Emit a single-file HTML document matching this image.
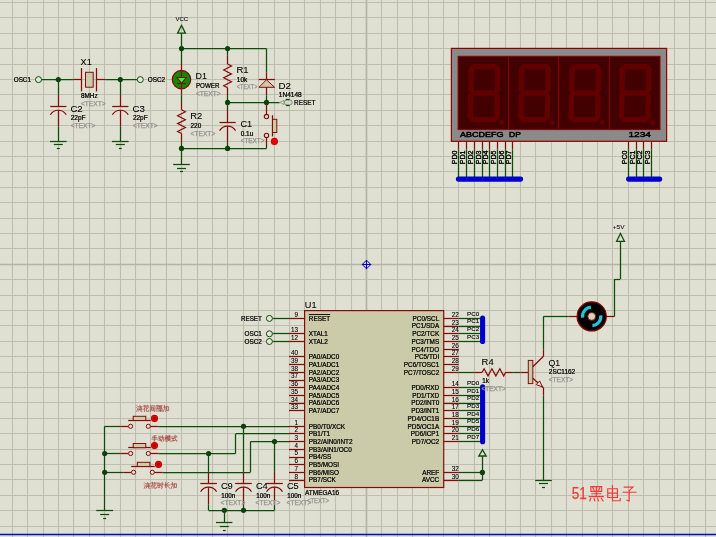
<!DOCTYPE html>
<html><head><meta charset="utf-8"><title>schematic</title>
<style>
html,body{margin:0;padding:0;background:#dfe0d1;overflow:hidden}
#sheet{width:716px;height:537px;background:#dfe0d1;overflow:hidden}
svg{display:block;will-change:transform;font-family:"Liberation Sans",sans-serif}
</style></head><body>
<div id="sheet"><svg width="716" height="537" viewBox="0 0 716 537">
<line x1="12.5" y1="0" x2="12.5" y2="537" stroke="#bdbeae" stroke-width="1.1"/>
<line x1="27.5" y1="0" x2="27.5" y2="537" stroke="#bdbeae" stroke-width="1.1"/>
<line x1="43.5" y1="0" x2="43.5" y2="537" stroke="#bdbeae" stroke-width="1.1"/>
<line x1="58.5" y1="0" x2="58.5" y2="537" stroke="#bdbeae" stroke-width="1.1"/>
<line x1="73.5" y1="0" x2="73.5" y2="537" stroke="#bdbeae" stroke-width="1.1"/>
<line x1="89.5" y1="0" x2="89.5" y2="537" stroke="#bdbeae" stroke-width="1.1"/>
<line x1="104.5" y1="0" x2="104.5" y2="537" stroke="#bdbeae" stroke-width="1.1"/>
<line x1="120.5" y1="0" x2="120.5" y2="537" stroke="#bdbeae" stroke-width="1.1"/>
<line x1="135.5" y1="0" x2="135.5" y2="537" stroke="#bdbeae" stroke-width="1.1"/>
<line x1="150.5" y1="0" x2="150.5" y2="537" stroke="#bdbeae" stroke-width="1.1"/>
<line x1="166.5" y1="0" x2="166.5" y2="537" stroke="#bdbeae" stroke-width="1.1"/>
<line x1="181.5" y1="0" x2="181.5" y2="537" stroke="#bdbeae" stroke-width="1.1"/>
<line x1="197.5" y1="0" x2="197.5" y2="537" stroke="#bdbeae" stroke-width="1.1"/>
<line x1="212.5" y1="0" x2="212.5" y2="537" stroke="#bdbeae" stroke-width="1.1"/>
<line x1="227.5" y1="0" x2="227.5" y2="537" stroke="#bdbeae" stroke-width="1.1"/>
<line x1="243.5" y1="0" x2="243.5" y2="537" stroke="#bdbeae" stroke-width="1.1"/>
<line x1="258.5" y1="0" x2="258.5" y2="537" stroke="#bdbeae" stroke-width="1.1"/>
<line x1="274.5" y1="0" x2="274.5" y2="537" stroke="#bdbeae" stroke-width="1.1"/>
<line x1="289.5" y1="0" x2="289.5" y2="537" stroke="#bdbeae" stroke-width="1.1"/>
<line x1="304.5" y1="0" x2="304.5" y2="537" stroke="#bdbeae" stroke-width="1.1"/>
<line x1="320.5" y1="0" x2="320.5" y2="537" stroke="#bdbeae" stroke-width="1.1"/>
<line x1="335.5" y1="0" x2="335.5" y2="537" stroke="#bdbeae" stroke-width="1.1"/>
<line x1="351.5" y1="0" x2="351.5" y2="537" stroke="#bdbeae" stroke-width="1.1"/>
<line x1="366.5" y1="0" x2="366.5" y2="537" stroke="#b3b4a3" stroke-width="1.7"/>
<line x1="381.5" y1="0" x2="381.5" y2="537" stroke="#bdbeae" stroke-width="1.1"/>
<line x1="397.5" y1="0" x2="397.5" y2="537" stroke="#bdbeae" stroke-width="1.1"/>
<line x1="412.5" y1="0" x2="412.5" y2="537" stroke="#bdbeae" stroke-width="1.1"/>
<line x1="428.5" y1="0" x2="428.5" y2="537" stroke="#bdbeae" stroke-width="1.1"/>
<line x1="443.5" y1="0" x2="443.5" y2="537" stroke="#bdbeae" stroke-width="1.1"/>
<line x1="458.5" y1="0" x2="458.5" y2="537" stroke="#bdbeae" stroke-width="1.1"/>
<line x1="474.5" y1="0" x2="474.5" y2="537" stroke="#bdbeae" stroke-width="1.1"/>
<line x1="489.5" y1="0" x2="489.5" y2="537" stroke="#bdbeae" stroke-width="1.1"/>
<line x1="505.5" y1="0" x2="505.5" y2="537" stroke="#bdbeae" stroke-width="1.1"/>
<line x1="520.5" y1="0" x2="520.5" y2="537" stroke="#bdbeae" stroke-width="1.1"/>
<line x1="535.5" y1="0" x2="535.5" y2="537" stroke="#bdbeae" stroke-width="1.1"/>
<line x1="551.5" y1="0" x2="551.5" y2="537" stroke="#bdbeae" stroke-width="1.1"/>
<line x1="566.5" y1="0" x2="566.5" y2="537" stroke="#bdbeae" stroke-width="1.1"/>
<line x1="582.5" y1="0" x2="582.5" y2="537" stroke="#bdbeae" stroke-width="1.1"/>
<line x1="597.5" y1="0" x2="597.5" y2="537" stroke="#bdbeae" stroke-width="1.1"/>
<line x1="612.5" y1="0" x2="612.5" y2="537" stroke="#bdbeae" stroke-width="1.1"/>
<line x1="628.5" y1="0" x2="628.5" y2="537" stroke="#bdbeae" stroke-width="1.1"/>
<line x1="643.5" y1="0" x2="643.5" y2="537" stroke="#bdbeae" stroke-width="1.1"/>
<line x1="659.5" y1="0" x2="659.5" y2="537" stroke="#bdbeae" stroke-width="1.1"/>
<line x1="674.5" y1="0" x2="674.5" y2="537" stroke="#bdbeae" stroke-width="1.1"/>
<line x1="689.5" y1="0" x2="689.5" y2="537" stroke="#bdbeae" stroke-width="1.1"/>
<line x1="705.5" y1="0" x2="705.5" y2="537" stroke="#bdbeae" stroke-width="1.1"/>
<line x1="0" y1="2.5" x2="716" y2="2.5" stroke="#bdbeae" stroke-width="1.1"/>
<line x1="0" y1="17.5" x2="716" y2="17.5" stroke="#bdbeae" stroke-width="1.1"/>
<line x1="0" y1="33.5" x2="716" y2="33.5" stroke="#bdbeae" stroke-width="1.1"/>
<line x1="0" y1="48.5" x2="716" y2="48.5" stroke="#bdbeae" stroke-width="1.1"/>
<line x1="0" y1="64.5" x2="716" y2="64.5" stroke="#bdbeae" stroke-width="1.1"/>
<line x1="0" y1="79.5" x2="716" y2="79.5" stroke="#bdbeae" stroke-width="1.1"/>
<line x1="0" y1="94.5" x2="716" y2="94.5" stroke="#bdbeae" stroke-width="1.1"/>
<line x1="0" y1="110.5" x2="716" y2="110.5" stroke="#bdbeae" stroke-width="1.1"/>
<line x1="0" y1="125.5" x2="716" y2="125.5" stroke="#bdbeae" stroke-width="1.1"/>
<line x1="0" y1="141.5" x2="716" y2="141.5" stroke="#bdbeae" stroke-width="1.1"/>
<line x1="0" y1="156.5" x2="716" y2="156.5" stroke="#bdbeae" stroke-width="1.1"/>
<line x1="0" y1="171.5" x2="716" y2="171.5" stroke="#bdbeae" stroke-width="1.1"/>
<line x1="0" y1="187.5" x2="716" y2="187.5" stroke="#bdbeae" stroke-width="1.1"/>
<line x1="0" y1="202.5" x2="716" y2="202.5" stroke="#bdbeae" stroke-width="1.1"/>
<line x1="0" y1="218.5" x2="716" y2="218.5" stroke="#bdbeae" stroke-width="1.1"/>
<line x1="0" y1="233.5" x2="716" y2="233.5" stroke="#bdbeae" stroke-width="1.1"/>
<line x1="0" y1="248.5" x2="716" y2="248.5" stroke="#bdbeae" stroke-width="1.1"/>
<line x1="0" y1="264.5" x2="716" y2="264.5" stroke="#b3b4a3" stroke-width="1.7"/>
<line x1="0" y1="279.5" x2="716" y2="279.5" stroke="#bdbeae" stroke-width="1.1"/>
<line x1="0" y1="295.5" x2="716" y2="295.5" stroke="#bdbeae" stroke-width="1.1"/>
<line x1="0" y1="310.5" x2="716" y2="310.5" stroke="#bdbeae" stroke-width="1.1"/>
<line x1="0" y1="325.5" x2="716" y2="325.5" stroke="#bdbeae" stroke-width="1.1"/>
<line x1="0" y1="341.5" x2="716" y2="341.5" stroke="#bdbeae" stroke-width="1.1"/>
<line x1="0" y1="356.5" x2="716" y2="356.5" stroke="#bdbeae" stroke-width="1.1"/>
<line x1="0" y1="372.5" x2="716" y2="372.5" stroke="#bdbeae" stroke-width="1.1"/>
<line x1="0" y1="387.5" x2="716" y2="387.5" stroke="#bdbeae" stroke-width="1.1"/>
<line x1="0" y1="402.5" x2="716" y2="402.5" stroke="#bdbeae" stroke-width="1.1"/>
<line x1="0" y1="418.5" x2="716" y2="418.5" stroke="#bdbeae" stroke-width="1.1"/>
<line x1="0" y1="433.5" x2="716" y2="433.5" stroke="#bdbeae" stroke-width="1.1"/>
<line x1="0" y1="449.5" x2="716" y2="449.5" stroke="#bdbeae" stroke-width="1.1"/>
<line x1="0" y1="464.5" x2="716" y2="464.5" stroke="#bdbeae" stroke-width="1.1"/>
<line x1="0" y1="479.5" x2="716" y2="479.5" stroke="#bdbeae" stroke-width="1.1"/>
<line x1="0" y1="495.5" x2="716" y2="495.5" stroke="#bdbeae" stroke-width="1.1"/>
<line x1="0" y1="510.5" x2="716" y2="510.5" stroke="#bdbeae" stroke-width="1.1"/>
<line x1="0" y1="526.5" x2="716" y2="526.5" stroke="#bdbeae" stroke-width="1.1"/>
<line x1="0" y1="534.5" x2="716" y2="534.5" stroke="#0808c4" stroke-width="1.3"/>
<path d="M366.5 260.2 L370.8 264.5 L366.5 268.8 L362.2 264.5 Z" stroke="#0000c0" stroke-width="1" fill="none" stroke-linejoin="miter"/>
<line x1="362.2" y1="264.5" x2="370.8" y2="264.5" stroke="#0000c0" stroke-width="1"/>
<line x1="366.5" y1="260.2" x2="366.5" y2="268.8" stroke="#0000c0" stroke-width="1"/>
<text x="13.7" y="81.9" font-size="6.4" fill="#000000" stroke="#000000" stroke-width="0.24" text-anchor="start" textLength="17.3" lengthAdjust="spacingAndGlyphs">OSC1</text>
<line x1="41.5" y1="79.5" x2="73.2" y2="79.5" stroke="#0c4d0c" stroke-width="1.25"/>
<line x1="73.2" y1="79.5" x2="81.6" y2="79.5" stroke="#860a0a" stroke-width="1.25"/>
<line x1="81.5" y1="68.1" x2="81.5" y2="91.4" stroke="#860a0a" stroke-width="1.25"/>
<line x1="96.5" y1="68.1" x2="96.5" y2="91.4" stroke="#860a0a" stroke-width="1.25"/>
<rect x="85.5" y="72.3" width="7.7" height="14.9" stroke="#860a0a" fill="#cbcbaa" stroke-width="1"/>
<line x1="96.7" y1="79.5" x2="105.1" y2="79.5" stroke="#860a0a" stroke-width="1.25"/>
<line x1="105.1" y1="79.5" x2="137.3" y2="79.5" stroke="#0c4d0c" stroke-width="1.25"/>
<circle cx="38.5" cy="79.6" r="3" stroke="#0c4d0c" fill="#e6e7da" stroke-width="1"/>
<circle cx="140.3" cy="79.6" r="3" stroke="#0c4d0c" fill="#e6e7da" stroke-width="1"/>
<text x="147.8" y="81.9" font-size="6.4" fill="#000000" stroke="#000000" stroke-width="0.24" text-anchor="start" textLength="17.3" lengthAdjust="spacingAndGlyphs">OSC2</text>
<line x1="58.5" y1="79.6" x2="58.5" y2="94.9" stroke="#0c4d0c" stroke-width="1.25"/>
<line x1="58.5" y1="94.9" x2="58.5" y2="106.5" stroke="#860a0a" stroke-width="1.25"/>
<line x1="50.2" y1="106.5" x2="66.4" y2="106.5" stroke="#860a0a" stroke-width="1.25"/>
<path d="M50.3 114.8 A9.3 9.3 0 0 1 66.3 114.8" stroke="#860a0a" stroke-width="1.2" fill="none"/>
<line x1="58.5" y1="110.2" x2="58.5" y2="126.2" stroke="#860a0a" stroke-width="1.25"/>
<line x1="58.5" y1="126.2" x2="58.5" y2="133" stroke="#0c4d0c" stroke-width="1.25"/>
<line x1="120.5" y1="79.6" x2="120.5" y2="94.9" stroke="#0c4d0c" stroke-width="1.25"/>
<line x1="120.5" y1="94.9" x2="120.5" y2="106.5" stroke="#860a0a" stroke-width="1.25"/>
<line x1="112.2" y1="106.5" x2="128.4" y2="106.5" stroke="#860a0a" stroke-width="1.25"/>
<path d="M112.3 114.8 A9.3 9.3 0 0 1 128.3 114.8" stroke="#860a0a" stroke-width="1.2" fill="none"/>
<line x1="120.5" y1="110.2" x2="120.5" y2="126.2" stroke="#860a0a" stroke-width="1.25"/>
<line x1="120.5" y1="126.2" x2="120.5" y2="133" stroke="#0c4d0c" stroke-width="1.25"/>
<line x1="58.5" y1="133" x2="58.5" y2="141.1" stroke="#0c4d0c" stroke-width="1.25"/>
<line x1="50" y1="141.5" x2="66.6" y2="141.5" stroke="#0c4d0c" stroke-width="1.25"/>
<line x1="53.8" y1="144.5" x2="62.8" y2="144.5" stroke="#0c4d0c" stroke-width="1.25"/>
<line x1="56.8" y1="148.5" x2="59.8" y2="148.5" stroke="#0c4d0c" stroke-width="1.25"/>
<line x1="120.5" y1="133" x2="120.5" y2="141.1" stroke="#0c4d0c" stroke-width="1.25"/>
<line x1="112" y1="141.5" x2="128.6" y2="141.5" stroke="#0c4d0c" stroke-width="1.25"/>
<line x1="115.8" y1="144.5" x2="124.8" y2="144.5" stroke="#0c4d0c" stroke-width="1.25"/>
<line x1="118.8" y1="148.5" x2="121.8" y2="148.5" stroke="#0c4d0c" stroke-width="1.25"/>
<circle cx="58.3" cy="79.6" r="2.6" stroke="none" fill="#0c400c" stroke-width="0"/>
<circle cx="120.3" cy="79.6" r="2.6" stroke="none" fill="#0c400c" stroke-width="0"/>
<text x="80.6" y="64.8" font-size="9.8" fill="#000000" stroke="#000000" stroke-width="0.1" text-anchor="start" textLength="11.1" lengthAdjust="spacingAndGlyphs">X1</text>
<text x="80.9" y="97.6" font-size="6.4" fill="#000000" stroke="#000000" stroke-width="0.24" text-anchor="start" textLength="16.8" lengthAdjust="spacingAndGlyphs">8MHz</text>
<text x="80.9" y="105.8" font-size="6.4" fill="#939393" stroke="#939393" stroke-width="0.25" text-anchor="start" textLength="24.7" lengthAdjust="spacingAndGlyphs">&lt;TEXT&gt;</text>
<text x="70.4" y="111.8" font-size="9.8" fill="#000000" stroke="#000000" stroke-width="0.1" text-anchor="start" textLength="12.3" lengthAdjust="spacingAndGlyphs">C2</text>
<text x="70.7" y="119.9" font-size="6.4" fill="#000000" stroke="#000000" stroke-width="0.24" text-anchor="start" textLength="14.8" lengthAdjust="spacingAndGlyphs">22pF</text>
<text x="70.7" y="127.9" font-size="6.4" fill="#939393" stroke="#939393" stroke-width="0.25" text-anchor="start" textLength="24.7" lengthAdjust="spacingAndGlyphs">&lt;TEXT&gt;</text>
<text x="132.6" y="111.8" font-size="9.8" fill="#000000" stroke="#000000" stroke-width="0.1" text-anchor="start" textLength="12.3" lengthAdjust="spacingAndGlyphs">C3</text>
<text x="132.9" y="119.9" font-size="6.4" fill="#000000" stroke="#000000" stroke-width="0.24" text-anchor="start" textLength="14.8" lengthAdjust="spacingAndGlyphs">22pF</text>
<text x="132.9" y="127.9" font-size="6.4" fill="#939393" stroke="#939393" stroke-width="0.25" text-anchor="start" textLength="24.7" lengthAdjust="spacingAndGlyphs">&lt;TEXT&gt;</text>
<text x="175.5" y="20.6" font-size="6.2" fill="#202020" stroke="#202020" stroke-width="0.12" text-anchor="start" textLength="12.7" lengthAdjust="spacingAndGlyphs">VCC</text>
<path d="M181.5 25.4 L185.4 33.2 L177.6 33.2 Z" stroke="#0c4d0c" stroke-width="1.3" fill="none" stroke-linejoin="miter"/>
<line x1="181.5" y1="33.2" x2="181.5" y2="64" stroke="#0c4d0c" stroke-width="1.25"/>
<line x1="181.5" y1="64" x2="181.5" y2="70.1" stroke="#860a0a" stroke-width="1.25"/>
<line x1="181.5" y1="48.5" x2="266.5" y2="48.5" stroke="#0c4d0c" stroke-width="1.25"/>
<circle cx="181.5" cy="79.6" r="9.2" stroke="#860a0a" fill="#0a8c0a" stroke-width="1.3"/>
<line x1="181.5" y1="70.1" x2="181.5" y2="89.2" stroke="#860a0a" stroke-width="1.25"/>
<path d="M177 77.5 L186.2 77.5 L181.6 83.3 Z" stroke="#860a0a" stroke-width="1.1" fill="#28ff28" stroke-linejoin="miter"/>
<line x1="177" y1="83.5" x2="185.9" y2="83.5" stroke="#860a0a" stroke-width="1.25"/>
<line x1="181.5" y1="89.2" x2="181.5" y2="94.4" stroke="#860a0a" stroke-width="1.25"/>
<line x1="181.5" y1="94.4" x2="181.5" y2="102" stroke="#0c4d0c" stroke-width="1.25"/>
<line x1="181.5" y1="102" x2="181.5" y2="109.8" stroke="#860a0a" stroke-width="1.25"/>
<path d="M181.5 109.8 L185.4 111.77 L177.6 115.72 L185.4 119.67 L177.6 123.62 L185.4 127.58 L177.6 131.53 L181.5 133.5" stroke="#860a0a" stroke-width="1.2" fill="none" stroke-linejoin="miter"/>
<line x1="181.5" y1="133.5" x2="181.5" y2="141.9" stroke="#860a0a" stroke-width="1.25"/>
<line x1="181.5" y1="141.9" x2="181.5" y2="148.4" stroke="#0c4d0c" stroke-width="1.25"/>
<line x1="181.5" y1="148.4" x2="181.5" y2="164.5" stroke="#0c4d0c" stroke-width="1.25"/>
<line x1="173.2" y1="164.5" x2="189.8" y2="164.5" stroke="#0c4d0c" stroke-width="1.25"/>
<line x1="177" y1="168.5" x2="186" y2="168.5" stroke="#0c4d0c" stroke-width="1.25"/>
<line x1="180" y1="171.5" x2="183" y2="171.5" stroke="#0c4d0c" stroke-width="1.25"/>
<text x="195.6" y="78.9" font-size="9.8" fill="#000000" stroke="#000000" stroke-width="0.1" text-anchor="start" textLength="11.4" lengthAdjust="spacingAndGlyphs">D1</text>
<text x="195.9" y="87.7" font-size="6.4" fill="#000000" stroke="#000000" stroke-width="0.24" text-anchor="start" textLength="23.6" lengthAdjust="spacingAndGlyphs">POWER</text>
<text x="195.9" y="95.7" font-size="6.4" fill="#939393" stroke="#939393" stroke-width="0.25" text-anchor="start" textLength="24.7" lengthAdjust="spacingAndGlyphs">&lt;TEXT&gt;</text>
<text x="190.3" y="118.8" font-size="9.8" fill="#000000" stroke="#000000" stroke-width="0.1" text-anchor="start" textLength="12" lengthAdjust="spacingAndGlyphs">R2</text>
<text x="190.6" y="127.9" font-size="6.4" fill="#000000" stroke="#000000" stroke-width="0.24" text-anchor="start" textLength="10.6" lengthAdjust="spacingAndGlyphs">220</text>
<text x="190.6" y="135.9" font-size="6.4" fill="#939393" stroke="#939393" stroke-width="0.25" text-anchor="start" textLength="24.7" lengthAdjust="spacingAndGlyphs">&lt;TEXT&gt;</text>
<line x1="227.5" y1="48.6" x2="227.5" y2="55.3" stroke="#0c4d0c" stroke-width="1.25"/>
<line x1="227.5" y1="55.3" x2="227.5" y2="64" stroke="#860a0a" stroke-width="1.25"/>
<path d="M227.6 64 L231.5 65.97 L223.7 69.92 L231.5 73.88 L223.7 77.83 L231.5 81.78 L223.7 85.73 L227.6 87.7" stroke="#860a0a" stroke-width="1.2" fill="none" stroke-linejoin="miter"/>
<line x1="227.5" y1="87.7" x2="227.5" y2="95" stroke="#860a0a" stroke-width="1.25"/>
<line x1="227.5" y1="95" x2="227.5" y2="102.4" stroke="#0c4d0c" stroke-width="1.25"/>
<text x="236.5" y="73" font-size="9.8" fill="#000000" stroke="#000000" stroke-width="0.1" text-anchor="start" textLength="12.1" lengthAdjust="spacingAndGlyphs">R1</text>
<text x="236.8" y="81.6" font-size="6.4" fill="#000000" stroke="#000000" stroke-width="0.24" text-anchor="start" textLength="10.4" lengthAdjust="spacingAndGlyphs">10k</text>
<text x="236.8" y="88.8" font-size="6.4" fill="#939393" stroke="#939393" stroke-width="0.25" text-anchor="start" textLength="20.6" lengthAdjust="spacingAndGlyphs">&lt;TEXT&gt;</text>
<line x1="227.5" y1="102.4" x2="227.5" y2="110" stroke="#0c4d0c" stroke-width="1.25"/>
<line x1="227.5" y1="110" x2="227.5" y2="122.3" stroke="#860a0a" stroke-width="1.25"/>
<line x1="219.5" y1="122.5" x2="235.7" y2="122.5" stroke="#860a0a" stroke-width="1.25"/>
<path d="M219.6 130.6 A9.3 9.3 0 0 1 235.6 130.6" stroke="#860a0a" stroke-width="1.2" fill="none"/>
<line x1="227.5" y1="126" x2="227.5" y2="141.9" stroke="#860a0a" stroke-width="1.25"/>
<line x1="227.5" y1="141.9" x2="227.5" y2="148.4" stroke="#0c4d0c" stroke-width="1.25"/>
<text x="240.4" y="127.1" font-size="9.8" fill="#000000" stroke="#000000" stroke-width="0.1" text-anchor="start" textLength="11.8" lengthAdjust="spacingAndGlyphs">C1</text>
<text x="240.7" y="135.8" font-size="6.4" fill="#000000" stroke="#000000" stroke-width="0.24" text-anchor="start" textLength="12.6" lengthAdjust="spacingAndGlyphs">0.1u</text>
<text x="240.7" y="143" font-size="6.4" fill="#939393" stroke="#939393" stroke-width="0.25" text-anchor="start" textLength="23.8" lengthAdjust="spacingAndGlyphs">&lt;TEXT&gt;</text>
<line x1="227.6" y1="102.5" x2="279.6" y2="102.5" stroke="#0c4d0c" stroke-width="1.25"/>
<line x1="181.5" y1="148.5" x2="266.5" y2="148.5" stroke="#0c4d0c" stroke-width="1.25"/>
<line x1="266.5" y1="48.6" x2="266.5" y2="72.6" stroke="#0c4d0c" stroke-width="1.25"/>
<line x1="266.5" y1="72.6" x2="266.5" y2="79.8" stroke="#860a0a" stroke-width="1.25"/>
<line x1="258.7" y1="79.5" x2="274.9" y2="79.5" stroke="#860a0a" stroke-width="1.25"/>
<path d="M266.5 79.8 L274.6 87.3 L259 87.3 Z" stroke="#860a0a" stroke-width="1" fill="#cbcbaa" stroke-linejoin="miter"/>
<line x1="266.5" y1="87.3" x2="266.5" y2="95.2" stroke="#860a0a" stroke-width="1.25"/>
<line x1="266.5" y1="95.2" x2="266.5" y2="102.4" stroke="#0c4d0c" stroke-width="1.25"/>
<text x="278.5" y="88.9" font-size="9.8" fill="#000000" stroke="#000000" stroke-width="0.1" text-anchor="start" textLength="12.5" lengthAdjust="spacingAndGlyphs">D2</text>
<text x="278.8" y="96.5" font-size="6.4" fill="#000000" stroke="#000000" stroke-width="0.24" text-anchor="start" textLength="22.9" lengthAdjust="spacingAndGlyphs">1N4148</text>
<path d="M280 102.4 L284 100.2 L284 104.6 Z" stroke="#8f9088" fill="none" stroke-width="0.9"/>
<rect x="284.4" y="99.9" width="7.8" height="5.1" rx="2.4" stroke="#7f867b" fill="#d6d7ca" stroke-width="0.9"/>
<line x1="285.8" y1="99.5" x2="289.6" y2="99.5" stroke="#0c4d0c" stroke-width="1.25"/>
<line x1="285.8" y1="105.5" x2="289.6" y2="105.5" stroke="#0c4d0c" stroke-width="1.25"/>
<text x="294.1" y="104.7" font-size="6.4" fill="#000000" stroke="#000000" stroke-width="0.24" text-anchor="start" textLength="21.3" lengthAdjust="spacingAndGlyphs">RESET</text>
<line x1="266.5" y1="102.4" x2="266.5" y2="114.3" stroke="#860a0a" stroke-width="1.25"/>
<circle cx="266.5" cy="116.6" r="2.2" stroke="#860a0a" fill="#dcdcc8" stroke-width="1.1"/>
<circle cx="266.5" cy="135.4" r="2.2" stroke="#860a0a" fill="#dcdcc8" stroke-width="1.1"/>
<line x1="266.5" y1="137.4" x2="266.5" y2="146" stroke="#860a0a" stroke-width="1.25"/>
<line x1="266.5" y1="146" x2="266.5" y2="148.4" stroke="#0c4d0c" stroke-width="1.25"/>
<line x1="272.5" y1="115.2" x2="272.5" y2="136.4" stroke="#860a0a" stroke-width="1.25"/>
<rect x="272.5" y="119.3" width="4.3" height="13.2" stroke="#860a0a" fill="#cbcbaa" stroke-width="1"/>
<circle cx="274.4" cy="141.4" r="3" stroke="#c80000" fill="#ff0000" stroke-width="1.1"/>
<line x1="273.2" y1="141.5" x2="275.8" y2="141.5" stroke="#a00000" stroke-width="1.1"/>
<circle cx="181.5" cy="48.6" r="2.6" stroke="none" fill="#0c400c" stroke-width="0"/>
<circle cx="227.6" cy="48.6" r="2.6" stroke="none" fill="#0c400c" stroke-width="0"/>
<circle cx="227.6" cy="102.4" r="2.6" stroke="none" fill="#0c400c" stroke-width="0"/>
<circle cx="266.5" cy="102.4" r="2.6" stroke="none" fill="#0c400c" stroke-width="0"/>
<circle cx="181.5" cy="148.4" r="2.6" stroke="none" fill="#0c400c" stroke-width="0"/>
<circle cx="227.6" cy="148.4" r="2.6" stroke="none" fill="#0c400c" stroke-width="0"/>
<rect x="451.4" y="48.4" width="215.2" height="92.9" stroke="#8c0000" fill="#8a8a8a" stroke-width="1.2"/>
<rect x="458.1" y="56.3" width="201.9" height="73.3" stroke="#8c0000" fill="#430000" stroke-width="1"/>
<g transform="translate(468.8 64) skewX(-1.1)">
<path d="M1.85 2.65 L4.5 0 L27.3 0 L29.95 2.65 L27.3 5.3 L4.5 5.3 Z" fill="#620000"/>
<path d="M1.85 29.1 L4.5 26.45 L27.3 26.45 L29.95 29.1 L27.3 31.75 L4.5 31.75 Z" fill="#620000"/>
<path d="M1.85 55.55 L4.5 52.9 L27.3 52.9 L29.95 55.55 L27.3 58.2 L4.5 58.2 Z" fill="#620000"/>
<path d="M2.65 1.59 L5.3 4.24 L5.3 26.85 L2.65 29.5 L0 26.85 L0 4.24 Z" fill="#620000"/>
<path d="M2.65 28.7 L5.3 31.35 L5.3 53.96 L2.65 56.61 L0 53.96 L0 31.35 Z" fill="#620000"/>
<path d="M29.15 1.59 L31.8 4.24 L31.8 26.85 L29.15 29.5 L26.5 26.85 L26.5 4.24 Z" fill="#620000"/>
<path d="M29.15 28.7 L31.8 31.35 L31.8 53.96 L29.15 56.61 L26.5 53.96 L26.5 31.35 Z" fill="#620000"/>
</g>
<circle cx="501.5" cy="122.5" r="2.5" stroke="none" fill="#620000" stroke-width="0"/>
<line x1="508.5" y1="56.3" x2="508.5" y2="129.6" stroke="#8c0000" stroke-width="1"/>
<g transform="translate(519.15 64) skewX(-1.1)">
<path d="M1.85 2.65 L4.5 0 L27.3 0 L29.95 2.65 L27.3 5.3 L4.5 5.3 Z" fill="#620000"/>
<path d="M1.85 29.1 L4.5 26.45 L27.3 26.45 L29.95 29.1 L27.3 31.75 L4.5 31.75 Z" fill="#620000"/>
<path d="M1.85 55.55 L4.5 52.9 L27.3 52.9 L29.95 55.55 L27.3 58.2 L4.5 58.2 Z" fill="#620000"/>
<path d="M2.65 1.59 L5.3 4.24 L5.3 26.85 L2.65 29.5 L0 26.85 L0 4.24 Z" fill="#620000"/>
<path d="M2.65 28.7 L5.3 31.35 L5.3 53.96 L2.65 56.61 L0 53.96 L0 31.35 Z" fill="#620000"/>
<path d="M29.15 1.59 L31.8 4.24 L31.8 26.85 L29.15 29.5 L26.5 26.85 L26.5 4.24 Z" fill="#620000"/>
<path d="M29.15 28.7 L31.8 31.35 L31.8 53.96 L29.15 56.61 L26.5 53.96 L26.5 31.35 Z" fill="#620000"/>
</g>
<circle cx="551.85" cy="122.5" r="2.5" stroke="none" fill="#620000" stroke-width="0"/>
<line x1="558.5" y1="56.3" x2="558.5" y2="129.6" stroke="#8c0000" stroke-width="1"/>
<g transform="translate(569.5 64) skewX(-1.1)">
<path d="M1.85 2.65 L4.5 0 L27.3 0 L29.95 2.65 L27.3 5.3 L4.5 5.3 Z" fill="#620000"/>
<path d="M1.85 29.1 L4.5 26.45 L27.3 26.45 L29.95 29.1 L27.3 31.75 L4.5 31.75 Z" fill="#620000"/>
<path d="M1.85 55.55 L4.5 52.9 L27.3 52.9 L29.95 55.55 L27.3 58.2 L4.5 58.2 Z" fill="#620000"/>
<path d="M2.65 1.59 L5.3 4.24 L5.3 26.85 L2.65 29.5 L0 26.85 L0 4.24 Z" fill="#620000"/>
<path d="M2.65 28.7 L5.3 31.35 L5.3 53.96 L2.65 56.61 L0 53.96 L0 31.35 Z" fill="#620000"/>
<path d="M29.15 1.59 L31.8 4.24 L31.8 26.85 L29.15 29.5 L26.5 26.85 L26.5 4.24 Z" fill="#620000"/>
<path d="M29.15 28.7 L31.8 31.35 L31.8 53.96 L29.15 56.61 L26.5 53.96 L26.5 31.35 Z" fill="#620000"/>
</g>
<circle cx="602.2" cy="122.5" r="2.5" stroke="none" fill="#620000" stroke-width="0"/>
<line x1="609.5" y1="56.3" x2="609.5" y2="129.6" stroke="#8c0000" stroke-width="1"/>
<g transform="translate(619.85 64) skewX(-1.1)">
<path d="M1.85 2.65 L4.5 0 L27.3 0 L29.95 2.65 L27.3 5.3 L4.5 5.3 Z" fill="#620000"/>
<path d="M1.85 29.1 L4.5 26.45 L27.3 26.45 L29.95 29.1 L27.3 31.75 L4.5 31.75 Z" fill="#620000"/>
<path d="M1.85 55.55 L4.5 52.9 L27.3 52.9 L29.95 55.55 L27.3 58.2 L4.5 58.2 Z" fill="#620000"/>
<path d="M2.65 1.59 L5.3 4.24 L5.3 26.85 L2.65 29.5 L0 26.85 L0 4.24 Z" fill="#620000"/>
<path d="M2.65 28.7 L5.3 31.35 L5.3 53.96 L2.65 56.61 L0 53.96 L0 31.35 Z" fill="#620000"/>
<path d="M29.15 1.59 L31.8 4.24 L31.8 26.85 L29.15 29.5 L26.5 26.85 L26.5 4.24 Z" fill="#620000"/>
<path d="M29.15 28.7 L31.8 31.35 L31.8 53.96 L29.15 56.61 L26.5 53.96 L26.5 31.35 Z" fill="#620000"/>
</g>
<circle cx="652.55" cy="122.5" r="2.5" stroke="none" fill="#620000" stroke-width="0"/>
<text x="460" y="136.9" font-size="6.5" fill="#000" stroke="#000" stroke-width="0.24" text-anchor="start" textLength="43.4" lengthAdjust="spacingAndGlyphs" style="stroke-width:0.45">ABCDEFG</text>
<text x="509" y="136.9" font-size="6.5" fill="#000" stroke="#000" stroke-width="0.24" text-anchor="start" textLength="11.8" lengthAdjust="spacingAndGlyphs" style="stroke-width:0.45">DP</text>
<text x="628.4" y="136.9" font-size="6.5" fill="#000" stroke="#000" stroke-width="0.24" text-anchor="start" textLength="22.6" lengthAdjust="spacingAndGlyphs" style="stroke-width:0.4">1234</text>
<line x1="458.5" y1="141.3" x2="458.5" y2="149.4" stroke="#860a0a" stroke-width="1.25"/>
<line x1="458.5" y1="149.4" x2="458.5" y2="179.2" stroke="#0c4d0c" stroke-width="1.25"/>
<text transform="translate(456.6 164.3) rotate(-90)" font-size="6.4" fill="#000" stroke="#000" stroke-width="0.35" textLength="13.7" lengthAdjust="spacingAndGlyphs">PD0</text>
<line x1="466.5" y1="141.3" x2="466.5" y2="149.4" stroke="#860a0a" stroke-width="1.25"/>
<line x1="466.5" y1="149.4" x2="466.5" y2="179.2" stroke="#0c4d0c" stroke-width="1.25"/>
<text transform="translate(464.6 164.3) rotate(-90)" font-size="6.4" fill="#000" stroke="#000" stroke-width="0.35" textLength="13.7" lengthAdjust="spacingAndGlyphs">PD1</text>
<line x1="474.5" y1="141.3" x2="474.5" y2="149.4" stroke="#860a0a" stroke-width="1.25"/>
<line x1="474.5" y1="149.4" x2="474.5" y2="179.2" stroke="#0c4d0c" stroke-width="1.25"/>
<text transform="translate(472.6 164.3) rotate(-90)" font-size="6.4" fill="#000" stroke="#000" stroke-width="0.35" textLength="13.7" lengthAdjust="spacingAndGlyphs">PD2</text>
<line x1="482.5" y1="141.3" x2="482.5" y2="149.4" stroke="#860a0a" stroke-width="1.25"/>
<line x1="482.5" y1="149.4" x2="482.5" y2="179.2" stroke="#0c4d0c" stroke-width="1.25"/>
<text transform="translate(480.6 164.3) rotate(-90)" font-size="6.4" fill="#000" stroke="#000" stroke-width="0.35" textLength="13.7" lengthAdjust="spacingAndGlyphs">PD3</text>
<line x1="489.5" y1="141.3" x2="489.5" y2="149.4" stroke="#860a0a" stroke-width="1.25"/>
<line x1="489.5" y1="149.4" x2="489.5" y2="179.2" stroke="#0c4d0c" stroke-width="1.25"/>
<text transform="translate(487.6 164.3) rotate(-90)" font-size="6.4" fill="#000" stroke="#000" stroke-width="0.35" textLength="13.7" lengthAdjust="spacingAndGlyphs">PD4</text>
<line x1="497.5" y1="141.3" x2="497.5" y2="149.4" stroke="#860a0a" stroke-width="1.25"/>
<line x1="497.5" y1="149.4" x2="497.5" y2="179.2" stroke="#0c4d0c" stroke-width="1.25"/>
<text transform="translate(495.6 164.3) rotate(-90)" font-size="6.4" fill="#000" stroke="#000" stroke-width="0.35" textLength="13.7" lengthAdjust="spacingAndGlyphs">PD5</text>
<line x1="505.5" y1="141.3" x2="505.5" y2="149.4" stroke="#860a0a" stroke-width="1.25"/>
<line x1="505.5" y1="149.4" x2="505.5" y2="179.2" stroke="#0c4d0c" stroke-width="1.25"/>
<text transform="translate(503.6 164.3) rotate(-90)" font-size="6.4" fill="#000" stroke="#000" stroke-width="0.35" textLength="13.7" lengthAdjust="spacingAndGlyphs">PD6</text>
<line x1="512.5" y1="141.3" x2="512.5" y2="149.4" stroke="#860a0a" stroke-width="1.25"/>
<line x1="512.5" y1="149.4" x2="512.5" y2="179.2" stroke="#0c4d0c" stroke-width="1.25"/>
<text transform="translate(510.6 164.3) rotate(-90)" font-size="6.4" fill="#000" stroke="#000" stroke-width="0.35" textLength="13.7" lengthAdjust="spacingAndGlyphs">PD7</text>
<line x1="628.5" y1="141.3" x2="628.5" y2="149.4" stroke="#860a0a" stroke-width="1.25"/>
<line x1="628.5" y1="149.4" x2="628.5" y2="179.2" stroke="#0c4d0c" stroke-width="1.25"/>
<text transform="translate(626.6 164.3) rotate(-90)" font-size="6.4" fill="#000" stroke="#000" stroke-width="0.35" textLength="13.7" lengthAdjust="spacingAndGlyphs">PC0</text>
<line x1="636.5" y1="141.3" x2="636.5" y2="149.4" stroke="#860a0a" stroke-width="1.25"/>
<line x1="636.5" y1="149.4" x2="636.5" y2="179.2" stroke="#0c4d0c" stroke-width="1.25"/>
<text transform="translate(634.6 164.3) rotate(-90)" font-size="6.4" fill="#000" stroke="#000" stroke-width="0.35" textLength="13.7" lengthAdjust="spacingAndGlyphs">PC1</text>
<line x1="643.5" y1="141.3" x2="643.5" y2="149.4" stroke="#860a0a" stroke-width="1.25"/>
<line x1="643.5" y1="149.4" x2="643.5" y2="179.2" stroke="#0c4d0c" stroke-width="1.25"/>
<text transform="translate(641.6 164.3) rotate(-90)" font-size="6.4" fill="#000" stroke="#000" stroke-width="0.35" textLength="13.7" lengthAdjust="spacingAndGlyphs">PC2</text>
<line x1="651.5" y1="141.3" x2="651.5" y2="149.4" stroke="#860a0a" stroke-width="1.25"/>
<line x1="651.5" y1="149.4" x2="651.5" y2="179.2" stroke="#0c4d0c" stroke-width="1.25"/>
<text transform="translate(649.6 164.3) rotate(-90)" font-size="6.4" fill="#000" stroke="#000" stroke-width="0.35" textLength="13.7" lengthAdjust="spacingAndGlyphs">PC3</text>
<line x1="458.4" y1="179.1" x2="520.6" y2="179.1" stroke="#0000cc" stroke-width="5.1" stroke-linecap="round"/>
<line x1="628.6" y1="179.1" x2="659.7" y2="179.1" stroke="#0000cc" stroke-width="5.1" stroke-linecap="round"/>
<rect x="304.6" y="310.6" width="139.1" height="176.9" stroke="#860a0a" fill="#cbcbaa" stroke-width="1.2"/>
<text x="304.8" y="308" font-size="9.8" fill="#000000" stroke="#000000" stroke-width="0.1" text-anchor="start" textLength="11.7" lengthAdjust="spacingAndGlyphs">U1</text>
<text x="305" y="495.4" font-size="6.4" fill="#000000" stroke="#000000" stroke-width="0.24" text-anchor="start" textLength="34.1" lengthAdjust="spacingAndGlyphs">ATMEGA16</text>
<text x="307" y="503" font-size="6.4" fill="#939393" stroke="#939393" stroke-width="0.25" text-anchor="start" textLength="22" lengthAdjust="spacingAndGlyphs">&lt;TEXT&gt;</text>
<line x1="289" y1="318.5" x2="304.6" y2="318.5" stroke="#860a0a" stroke-width="1.25"/>
<text x="297.9" y="316.8" font-size="6.3" fill="#000" stroke="#000" stroke-width="0.1" text-anchor="end">9</text>
<text x="308.8" y="320.7" font-size="6.4" fill="#000000" stroke="#000000" stroke-width="0.24" text-anchor="start">RESET</text>
<line x1="289" y1="333.5" x2="304.6" y2="333.5" stroke="#860a0a" stroke-width="1.25"/>
<text x="297.9" y="332.2" font-size="6.3" fill="#000" stroke="#000" stroke-width="0.1" text-anchor="end">13</text>
<text x="308.8" y="336.1" font-size="6.4" fill="#000000" stroke="#000000" stroke-width="0.24" text-anchor="start">XTAL1</text>
<line x1="289" y1="341.5" x2="304.6" y2="341.5" stroke="#860a0a" stroke-width="1.25"/>
<text x="297.9" y="339.9" font-size="6.3" fill="#000" stroke="#000" stroke-width="0.1" text-anchor="end">12</text>
<text x="308.8" y="343.8" font-size="6.4" fill="#000000" stroke="#000000" stroke-width="0.24" text-anchor="start">XTAL2</text>
<line x1="289" y1="356.5" x2="304.6" y2="356.5" stroke="#860a0a" stroke-width="1.25"/>
<text x="297.9" y="355.3" font-size="6.3" fill="#000" stroke="#000" stroke-width="0.1" text-anchor="end">40</text>
<text x="308.8" y="359.2" font-size="6.4" fill="#000000" stroke="#000000" stroke-width="0.24" text-anchor="start">PA0/ADC0</text>
<line x1="289" y1="364.5" x2="304.6" y2="364.5" stroke="#860a0a" stroke-width="1.25"/>
<text x="297.9" y="363" font-size="6.3" fill="#000" stroke="#000" stroke-width="0.1" text-anchor="end">39</text>
<text x="308.8" y="366.9" font-size="6.4" fill="#000000" stroke="#000000" stroke-width="0.24" text-anchor="start">PA1/ADC1</text>
<line x1="289" y1="372.5" x2="304.6" y2="372.5" stroke="#860a0a" stroke-width="1.25"/>
<text x="297.9" y="370.7" font-size="6.3" fill="#000" stroke="#000" stroke-width="0.1" text-anchor="end">38</text>
<text x="308.8" y="374.6" font-size="6.4" fill="#000000" stroke="#000000" stroke-width="0.24" text-anchor="start">PA2/ADC2</text>
<line x1="289" y1="380.5" x2="304.6" y2="380.5" stroke="#860a0a" stroke-width="1.25"/>
<text x="297.9" y="378.4" font-size="6.3" fill="#000" stroke="#000" stroke-width="0.1" text-anchor="end">37</text>
<text x="308.8" y="382.3" font-size="6.4" fill="#000000" stroke="#000000" stroke-width="0.24" text-anchor="start">PA3/ADC3</text>
<line x1="289" y1="387.5" x2="304.6" y2="387.5" stroke="#860a0a" stroke-width="1.25"/>
<text x="297.9" y="386.1" font-size="6.3" fill="#000" stroke="#000" stroke-width="0.1" text-anchor="end">36</text>
<text x="308.8" y="390" font-size="6.4" fill="#000000" stroke="#000000" stroke-width="0.24" text-anchor="start">PA4/ADC4</text>
<line x1="289" y1="395.5" x2="304.6" y2="395.5" stroke="#860a0a" stroke-width="1.25"/>
<text x="297.9" y="393.8" font-size="6.3" fill="#000" stroke="#000" stroke-width="0.1" text-anchor="end">35</text>
<text x="308.8" y="397.7" font-size="6.4" fill="#000000" stroke="#000000" stroke-width="0.24" text-anchor="start">PA5/ADC5</text>
<line x1="289" y1="403.5" x2="304.6" y2="403.5" stroke="#860a0a" stroke-width="1.25"/>
<text x="297.9" y="401.5" font-size="6.3" fill="#000" stroke="#000" stroke-width="0.1" text-anchor="end">34</text>
<text x="308.8" y="405.4" font-size="6.4" fill="#000000" stroke="#000000" stroke-width="0.24" text-anchor="start">PA6/ADC6</text>
<line x1="289" y1="410.5" x2="304.6" y2="410.5" stroke="#860a0a" stroke-width="1.25"/>
<text x="297.9" y="409.2" font-size="6.3" fill="#000" stroke="#000" stroke-width="0.1" text-anchor="end">33</text>
<text x="308.8" y="413.1" font-size="6.4" fill="#000000" stroke="#000000" stroke-width="0.24" text-anchor="start">PA7/ADC7</text>
<line x1="289" y1="426.5" x2="304.6" y2="426.5" stroke="#860a0a" stroke-width="1.25"/>
<text x="297.9" y="424.6" font-size="6.3" fill="#000" stroke="#000" stroke-width="0.1" text-anchor="end">1</text>
<text x="308.8" y="428.5" font-size="6.4" fill="#000000" stroke="#000000" stroke-width="0.24" text-anchor="start">PB0/T0/XCK</text>
<line x1="289" y1="433.5" x2="304.6" y2="433.5" stroke="#860a0a" stroke-width="1.25"/>
<text x="297.9" y="432.3" font-size="6.3" fill="#000" stroke="#000" stroke-width="0.1" text-anchor="end">2</text>
<text x="308.8" y="436.2" font-size="6.4" fill="#000000" stroke="#000000" stroke-width="0.24" text-anchor="start">PB1/T1</text>
<line x1="289" y1="441.5" x2="304.6" y2="441.5" stroke="#860a0a" stroke-width="1.25"/>
<text x="297.9" y="440" font-size="6.3" fill="#000" stroke="#000" stroke-width="0.1" text-anchor="end">3</text>
<text x="308.8" y="443.9" font-size="6.4" fill="#000000" stroke="#000000" stroke-width="0.24" text-anchor="start">PB2/AIN0/INT2</text>
<line x1="289" y1="449.5" x2="304.6" y2="449.5" stroke="#860a0a" stroke-width="1.25"/>
<text x="297.9" y="447.7" font-size="6.3" fill="#000" stroke="#000" stroke-width="0.1" text-anchor="end">4</text>
<text x="308.8" y="451.6" font-size="6.4" fill="#000000" stroke="#000000" stroke-width="0.24" text-anchor="start">PB3/AIN1/OC0</text>
<line x1="289" y1="457.5" x2="304.6" y2="457.5" stroke="#860a0a" stroke-width="1.25"/>
<text x="297.9" y="455.4" font-size="6.3" fill="#000" stroke="#000" stroke-width="0.1" text-anchor="end">5</text>
<text x="308.8" y="459.3" font-size="6.4" fill="#000000" stroke="#000000" stroke-width="0.24" text-anchor="start">PB4/SS</text>
<line x1="289" y1="464.5" x2="304.6" y2="464.5" stroke="#860a0a" stroke-width="1.25"/>
<text x="297.9" y="463.1" font-size="6.3" fill="#000" stroke="#000" stroke-width="0.1" text-anchor="end">6</text>
<text x="308.8" y="467" font-size="6.4" fill="#000000" stroke="#000000" stroke-width="0.24" text-anchor="start">PB5/MOSI</text>
<line x1="289" y1="472.5" x2="304.6" y2="472.5" stroke="#860a0a" stroke-width="1.25"/>
<text x="297.9" y="470.8" font-size="6.3" fill="#000" stroke="#000" stroke-width="0.1" text-anchor="end">7</text>
<text x="308.8" y="474.7" font-size="6.4" fill="#000000" stroke="#000000" stroke-width="0.24" text-anchor="start">PB6/MISO</text>
<line x1="289" y1="480.5" x2="304.6" y2="480.5" stroke="#860a0a" stroke-width="1.25"/>
<text x="297.9" y="478.5" font-size="6.3" fill="#000" stroke="#000" stroke-width="0.1" text-anchor="end">8</text>
<text x="308.8" y="482.4" font-size="6.4" fill="#000000" stroke="#000000" stroke-width="0.24" text-anchor="start">PB7/SCK</text>
<line x1="308.8" y1="314.5" x2="330.2" y2="314.5" stroke="#000000" stroke-width="0.9"/>
<line x1="443.7" y1="318.5" x2="458.8" y2="318.5" stroke="#860a0a" stroke-width="1.25"/>
<text x="451.7" y="316.8" font-size="6.3" fill="#000" stroke="#000" stroke-width="0.1" text-anchor="start">22</text>
<text x="439.2" y="320.7" font-size="6.4" fill="#000000" stroke="#000000" stroke-width="0.24" text-anchor="end">PC0/SCL</text>
<line x1="443.7" y1="326.5" x2="458.8" y2="326.5" stroke="#860a0a" stroke-width="1.25"/>
<text x="451.7" y="324.5" font-size="6.3" fill="#000" stroke="#000" stroke-width="0.1" text-anchor="start">23</text>
<text x="439.2" y="328.4" font-size="6.4" fill="#000000" stroke="#000000" stroke-width="0.24" text-anchor="end">PC1/SDA</text>
<line x1="443.7" y1="333.5" x2="458.8" y2="333.5" stroke="#860a0a" stroke-width="1.25"/>
<text x="451.7" y="332.2" font-size="6.3" fill="#000" stroke="#000" stroke-width="0.1" text-anchor="start">24</text>
<text x="439.2" y="336.1" font-size="6.4" fill="#000000" stroke="#000000" stroke-width="0.24" text-anchor="end">PC2/TCK</text>
<line x1="443.7" y1="341.5" x2="458.8" y2="341.5" stroke="#860a0a" stroke-width="1.25"/>
<text x="451.7" y="339.9" font-size="6.3" fill="#000" stroke="#000" stroke-width="0.1" text-anchor="start">25</text>
<text x="439.2" y="343.8" font-size="6.4" fill="#000000" stroke="#000000" stroke-width="0.24" text-anchor="end">PC3/TMS</text>
<line x1="443.7" y1="349.5" x2="458.8" y2="349.5" stroke="#860a0a" stroke-width="1.25"/>
<text x="451.7" y="347.6" font-size="6.3" fill="#000" stroke="#000" stroke-width="0.1" text-anchor="start">26</text>
<text x="439.2" y="351.5" font-size="6.4" fill="#000000" stroke="#000000" stroke-width="0.24" text-anchor="end">PC4/TDO</text>
<line x1="443.7" y1="356.5" x2="458.8" y2="356.5" stroke="#860a0a" stroke-width="1.25"/>
<text x="451.7" y="355.3" font-size="6.3" fill="#000" stroke="#000" stroke-width="0.1" text-anchor="start">27</text>
<text x="439.2" y="359.2" font-size="6.4" fill="#000000" stroke="#000000" stroke-width="0.24" text-anchor="end">PC5/TDI</text>
<line x1="443.7" y1="364.5" x2="458.8" y2="364.5" stroke="#860a0a" stroke-width="1.25"/>
<text x="451.7" y="363" font-size="6.3" fill="#000" stroke="#000" stroke-width="0.1" text-anchor="start">28</text>
<text x="439.2" y="366.9" font-size="6.4" fill="#000000" stroke="#000000" stroke-width="0.24" text-anchor="end">PC6/TOSC1</text>
<line x1="443.7" y1="372.5" x2="458.8" y2="372.5" stroke="#860a0a" stroke-width="1.25"/>
<text x="451.7" y="370.7" font-size="6.3" fill="#000" stroke="#000" stroke-width="0.1" text-anchor="start">29</text>
<text x="439.2" y="374.6" font-size="6.4" fill="#000000" stroke="#000000" stroke-width="0.24" text-anchor="end">PC7/TOSC2</text>
<line x1="443.7" y1="387.5" x2="458.8" y2="387.5" stroke="#860a0a" stroke-width="1.25"/>
<text x="451.7" y="386.1" font-size="6.3" fill="#000" stroke="#000" stroke-width="0.1" text-anchor="start">14</text>
<text x="439.2" y="390" font-size="6.4" fill="#000000" stroke="#000000" stroke-width="0.24" text-anchor="end">PD0/RXD</text>
<line x1="443.7" y1="395.5" x2="458.8" y2="395.5" stroke="#860a0a" stroke-width="1.25"/>
<text x="451.7" y="393.8" font-size="6.3" fill="#000" stroke="#000" stroke-width="0.1" text-anchor="start">15</text>
<text x="439.2" y="397.7" font-size="6.4" fill="#000000" stroke="#000000" stroke-width="0.24" text-anchor="end">PD1/TXD</text>
<line x1="443.7" y1="403.5" x2="458.8" y2="403.5" stroke="#860a0a" stroke-width="1.25"/>
<text x="451.7" y="401.5" font-size="6.3" fill="#000" stroke="#000" stroke-width="0.1" text-anchor="start">16</text>
<text x="439.2" y="405.4" font-size="6.4" fill="#000000" stroke="#000000" stroke-width="0.24" text-anchor="end">PD2/INT0</text>
<line x1="443.7" y1="410.5" x2="458.8" y2="410.5" stroke="#860a0a" stroke-width="1.25"/>
<text x="451.7" y="409.2" font-size="6.3" fill="#000" stroke="#000" stroke-width="0.1" text-anchor="start">17</text>
<text x="439.2" y="413.1" font-size="6.4" fill="#000000" stroke="#000000" stroke-width="0.24" text-anchor="end">PD3/INT1</text>
<line x1="443.7" y1="418.5" x2="458.8" y2="418.5" stroke="#860a0a" stroke-width="1.25"/>
<text x="451.7" y="416.9" font-size="6.3" fill="#000" stroke="#000" stroke-width="0.1" text-anchor="start">18</text>
<text x="439.2" y="420.8" font-size="6.4" fill="#000000" stroke="#000000" stroke-width="0.24" text-anchor="end">PD4/OC1B</text>
<line x1="443.7" y1="426.5" x2="458.8" y2="426.5" stroke="#860a0a" stroke-width="1.25"/>
<text x="451.7" y="424.6" font-size="6.3" fill="#000" stroke="#000" stroke-width="0.1" text-anchor="start">19</text>
<text x="439.2" y="428.5" font-size="6.4" fill="#000000" stroke="#000000" stroke-width="0.24" text-anchor="end">PD5/OC1A</text>
<line x1="443.7" y1="433.5" x2="458.8" y2="433.5" stroke="#860a0a" stroke-width="1.25"/>
<text x="451.7" y="432.3" font-size="6.3" fill="#000" stroke="#000" stroke-width="0.1" text-anchor="start">20</text>
<text x="439.2" y="436.2" font-size="6.4" fill="#000000" stroke="#000000" stroke-width="0.24" text-anchor="end">PD6/ICP1</text>
<line x1="443.7" y1="441.5" x2="458.8" y2="441.5" stroke="#860a0a" stroke-width="1.25"/>
<text x="451.7" y="440" font-size="6.3" fill="#000" stroke="#000" stroke-width="0.1" text-anchor="start">21</text>
<text x="439.2" y="443.9" font-size="6.4" fill="#000000" stroke="#000000" stroke-width="0.24" text-anchor="end">PD7/OC2</text>
<line x1="443.7" y1="472.5" x2="458.8" y2="472.5" stroke="#860a0a" stroke-width="1.25"/>
<text x="451.7" y="470.8" font-size="6.3" fill="#000" stroke="#000" stroke-width="0.1" text-anchor="start">32</text>
<text x="439.2" y="474.7" font-size="6.4" fill="#000000" stroke="#000000" stroke-width="0.24" text-anchor="end">AREF</text>
<line x1="443.7" y1="480.5" x2="458.8" y2="480.5" stroke="#860a0a" stroke-width="1.25"/>
<text x="451.7" y="478.5" font-size="6.3" fill="#000" stroke="#000" stroke-width="0.1" text-anchor="start">30</text>
<text x="439.2" y="482.4" font-size="6.4" fill="#000000" stroke="#000000" stroke-width="0.24" text-anchor="end">AVCC</text>
<line x1="272.4" y1="318.5" x2="289" y2="318.5" stroke="#0c4d0c" stroke-width="1.25"/>
<circle cx="269.4" cy="318.4" r="3" stroke="#0c4d0c" fill="#e6e7da" stroke-width="1"/>
<text x="240.9" y="320.7" font-size="6.4" fill="#000000" stroke="#000000" stroke-width="0.24" text-anchor="start" textLength="21" lengthAdjust="spacingAndGlyphs">RESET</text>
<line x1="272.4" y1="333.5" x2="289" y2="333.5" stroke="#0c4d0c" stroke-width="1.25"/>
<circle cx="269.4" cy="333.8" r="3" stroke="#0c4d0c" fill="#e6e7da" stroke-width="1"/>
<text x="244.6" y="336.1" font-size="6.4" fill="#000000" stroke="#000000" stroke-width="0.24" text-anchor="start" textLength="17.3" lengthAdjust="spacingAndGlyphs">OSC1</text>
<line x1="272.4" y1="341.5" x2="289" y2="341.5" stroke="#0c4d0c" stroke-width="1.25"/>
<circle cx="269.4" cy="341.5" r="3" stroke="#0c4d0c" fill="#e6e7da" stroke-width="1"/>
<text x="244.6" y="343.8" font-size="6.4" fill="#000000" stroke="#000000" stroke-width="0.24" text-anchor="start" textLength="17.3" lengthAdjust="spacingAndGlyphs">OSC2</text>
<line x1="458.8" y1="318.5" x2="482.6" y2="318.5" stroke="#0c4d0c" stroke-width="1.25"/>
<text x="467.1" y="315.6" font-size="6.2" fill="#000" stroke="#000" stroke-width="0.12" text-anchor="start" textLength="12.1" lengthAdjust="spacingAndGlyphs">PC0</text>
<line x1="458.8" y1="326.5" x2="482.6" y2="326.5" stroke="#0c4d0c" stroke-width="1.25"/>
<text x="467.1" y="323.3" font-size="6.2" fill="#000" stroke="#000" stroke-width="0.12" text-anchor="start" textLength="12.1" lengthAdjust="spacingAndGlyphs">PC1</text>
<line x1="458.8" y1="333.5" x2="482.6" y2="333.5" stroke="#0c4d0c" stroke-width="1.25"/>
<text x="467.1" y="331" font-size="6.2" fill="#000" stroke="#000" stroke-width="0.12" text-anchor="start" textLength="12.1" lengthAdjust="spacingAndGlyphs">PC2</text>
<line x1="458.8" y1="341.5" x2="482.6" y2="341.5" stroke="#0c4d0c" stroke-width="1.25"/>
<text x="467.1" y="338.7" font-size="6.2" fill="#000" stroke="#000" stroke-width="0.12" text-anchor="start" textLength="12.1" lengthAdjust="spacingAndGlyphs">PC3</text>
<line x1="482.6" y1="318.1" x2="482.6" y2="341.5" stroke="#0000cc" stroke-width="5.1" stroke-linecap="round"/>
<line x1="458.8" y1="387.5" x2="482.6" y2="387.5" stroke="#0c4d0c" stroke-width="1.25"/>
<text x="467.1" y="384.9" font-size="6.2" fill="#000" stroke="#000" stroke-width="0.12" text-anchor="start" textLength="12.1" lengthAdjust="spacingAndGlyphs">PD0</text>
<line x1="458.8" y1="395.5" x2="482.6" y2="395.5" stroke="#0c4d0c" stroke-width="1.25"/>
<text x="467.1" y="392.6" font-size="6.2" fill="#000" stroke="#000" stroke-width="0.12" text-anchor="start" textLength="12.1" lengthAdjust="spacingAndGlyphs">PD1</text>
<line x1="458.8" y1="403.5" x2="482.6" y2="403.5" stroke="#0c4d0c" stroke-width="1.25"/>
<text x="467.1" y="400.3" font-size="6.2" fill="#000" stroke="#000" stroke-width="0.12" text-anchor="start" textLength="12.1" lengthAdjust="spacingAndGlyphs">PD2</text>
<line x1="458.8" y1="410.5" x2="482.6" y2="410.5" stroke="#0c4d0c" stroke-width="1.25"/>
<text x="467.1" y="408" font-size="6.2" fill="#000" stroke="#000" stroke-width="0.12" text-anchor="start" textLength="12.1" lengthAdjust="spacingAndGlyphs">PD3</text>
<line x1="458.8" y1="418.5" x2="482.6" y2="418.5" stroke="#0c4d0c" stroke-width="1.25"/>
<text x="467.1" y="415.7" font-size="6.2" fill="#000" stroke="#000" stroke-width="0.12" text-anchor="start" textLength="12.1" lengthAdjust="spacingAndGlyphs">PD4</text>
<line x1="458.8" y1="426.5" x2="482.6" y2="426.5" stroke="#0c4d0c" stroke-width="1.25"/>
<text x="467.1" y="423.4" font-size="6.2" fill="#000" stroke="#000" stroke-width="0.12" text-anchor="start" textLength="12.1" lengthAdjust="spacingAndGlyphs">PD5</text>
<line x1="458.8" y1="433.5" x2="482.6" y2="433.5" stroke="#0c4d0c" stroke-width="1.25"/>
<text x="467.1" y="431.1" font-size="6.2" fill="#000" stroke="#000" stroke-width="0.12" text-anchor="start" textLength="12.1" lengthAdjust="spacingAndGlyphs">PD6</text>
<line x1="458.8" y1="441.5" x2="482.6" y2="441.5" stroke="#0c4d0c" stroke-width="1.25"/>
<text x="467.1" y="438.8" font-size="6.2" fill="#000" stroke="#000" stroke-width="0.12" text-anchor="start" textLength="12.1" lengthAdjust="spacingAndGlyphs">PD7</text>
<line x1="482.6" y1="386.9" x2="482.6" y2="441.7" stroke="#0000cc" stroke-width="5.1" stroke-linecap="round"/>
<line x1="458.8" y1="472.5" x2="482.4" y2="472.5" stroke="#0c4d0c" stroke-width="1.25"/>
<line x1="458.8" y1="480.5" x2="482.4" y2="480.5" stroke="#0c4d0c" stroke-width="1.25"/>
<line x1="482.5" y1="456" x2="482.5" y2="480.1" stroke="#0c4d0c" stroke-width="1.25"/>
<path d="M482.5 449.8 L486.2 456 L478.8 456 Z" stroke="#0c4d0c" stroke-width="1.3" fill="none" stroke-linejoin="miter"/>
<circle cx="482.4" cy="472.4" r="2.6" stroke="none" fill="#0c400c" stroke-width="0"/>
<line x1="458.8" y1="372.5" x2="474.2" y2="372.5" stroke="#0c4d0c" stroke-width="1.25"/>
<line x1="474.2" y1="372.5" x2="482.1" y2="372.5" stroke="#860a0a" stroke-width="1.25"/>
<path d="M482.1 372.3 L484.07 368.7 L488 375.9 L491.93 368.7 L495.87 375.9 L499.8 368.7 L503.73 375.9 L505.7 372.3" stroke="#860a0a" stroke-width="1.2" fill="none" stroke-linejoin="miter"/>
<line x1="505.7" y1="372.5" x2="513.2" y2="372.5" stroke="#860a0a" stroke-width="1.25"/>
<line x1="513.2" y1="372.5" x2="520.3" y2="372.5" stroke="#0c4d0c" stroke-width="1.25"/>
<line x1="520.3" y1="372.5" x2="528.3" y2="372.5" stroke="#860a0a" stroke-width="1.25"/>
<rect x="528.3" y="360.4" width="4.5" height="23.2" stroke="#860a0a" fill="#cbcbaa" stroke-width="1"/>
<line x1="532.8" y1="366.8" x2="543.5" y2="356.3" stroke="#860a0a" stroke-width="1.25"/>
<line x1="543.5" y1="356.3" x2="543.5" y2="349.2" stroke="#860a0a" stroke-width="1.25"/>
<line x1="532.8" y1="378.2" x2="543.5" y2="387.8" stroke="#860a0a" stroke-width="1.25"/>
<line x1="543.5" y1="387.8" x2="543.5" y2="395.3" stroke="#860a0a" stroke-width="1.25"/>
<path d="M542.6 387 L536.2 384.6 L539.6 380.9 Z" stroke="#860a0a" stroke-width="1" fill="#e0e0cf" stroke-linejoin="miter"/>
<line x1="543.5" y1="395.3" x2="543.5" y2="480.2" stroke="#0c4d0c" stroke-width="1.25"/>
<line x1="535.2" y1="480.5" x2="551.8" y2="480.5" stroke="#0c4d0c" stroke-width="1.25"/>
<line x1="539" y1="483.5" x2="548" y2="483.5" stroke="#0c4d0c" stroke-width="1.25"/>
<line x1="542" y1="487.5" x2="545" y2="487.5" stroke="#0c4d0c" stroke-width="1.25"/>
<text x="481.6" y="365.2" font-size="9.8" fill="#000000" stroke="#000000" stroke-width="0.1" text-anchor="start" textLength="12.1" lengthAdjust="spacingAndGlyphs">R4</text>
<text x="482.2" y="382.6" font-size="6.4" fill="#000000" stroke="#000000" stroke-width="0.24" text-anchor="start" textLength="6.7" lengthAdjust="spacingAndGlyphs">1k</text>
<text x="481.4" y="390.6" font-size="6.4" fill="#939393" stroke="#939393" stroke-width="0.25" text-anchor="start" textLength="24.3" lengthAdjust="spacingAndGlyphs">&lt;TEXT&gt;</text>
<text x="548.5" y="366.1" font-size="9.8" fill="#000000" stroke="#000000" stroke-width="0.1" text-anchor="start" textLength="11.7" lengthAdjust="spacingAndGlyphs">Q1</text>
<text x="548.8" y="373.9" font-size="6.4" fill="#000000" stroke="#000000" stroke-width="0.24" text-anchor="start" textLength="26.4" lengthAdjust="spacingAndGlyphs">2SC1162</text>
<text x="548.8" y="381.6" font-size="6.4" fill="#939393" stroke="#939393" stroke-width="0.25" text-anchor="start" textLength="24.2" lengthAdjust="spacingAndGlyphs">&lt;TEXT&gt;</text>
<line x1="543.5" y1="349.2" x2="543.5" y2="316.4" stroke="#0c4d0c" stroke-width="1.25"/>
<line x1="543.5" y1="316.5" x2="568.3" y2="316.5" stroke="#0c4d0c" stroke-width="1.25"/>
<line x1="568.3" y1="316.5" x2="577" y2="316.5" stroke="#860a0a" stroke-width="1.25"/>
<circle cx="591.7" cy="316.4" r="14.6" stroke="#8c0000" fill="#000" stroke-width="1.2"/>
<path d="M582.6 317.6 A9.2 9.2 0 0 1 590.9 307.2" stroke="#1fc4d6" stroke-width="3.2" fill="none"/>
<path d="M600.8 315.4 A9.2 9.2 0 0 1 592.4 325.6" stroke="#1fc4d6" stroke-width="3.2" fill="none"/>
<circle cx="591.7" cy="316.4" r="3.9" stroke="#8c0000" fill="#d6d4bd" stroke-width="0.8"/>
<line x1="606.3" y1="316.5" x2="614.6" y2="316.5" stroke="#860a0a" stroke-width="1.25"/>
<line x1="614.5" y1="316.4" x2="614.5" y2="279" stroke="#0c4d0c" stroke-width="1.25"/>
<line x1="614.6" y1="279.5" x2="620.3" y2="279.5" stroke="#0c4d0c" stroke-width="1.25"/>
<line x1="620.5" y1="279" x2="620.5" y2="241.3" stroke="#0c4d0c" stroke-width="1.25"/>
<path d="M620.5 233.5 L624.4 241.3 L616.6 241.3 Z" stroke="#0c4d0c" stroke-width="1.3" fill="none" stroke-linejoin="miter"/>
<text x="612.8" y="228.8" font-size="6.2" fill="#202020" stroke="#202020" stroke-width="0.12" text-anchor="start" textLength="11.7" lengthAdjust="spacingAndGlyphs">+5V</text>
<line x1="104.7" y1="426.5" x2="120.2" y2="426.5" stroke="#0c4d0c" stroke-width="1.25"/>
<line x1="120.2" y1="426.5" x2="128.4" y2="426.5" stroke="#860a0a" stroke-width="1.25"/>
<circle cx="130.6" cy="426.3" r="2.1" stroke="#860a0a" fill="#e0e0cf" stroke-width="1"/>
<circle cx="148.3" cy="426.3" r="2.1" stroke="#860a0a" fill="#e0e0cf" stroke-width="1"/>
<line x1="150.5" y1="426.5" x2="158.7" y2="426.5" stroke="#860a0a" stroke-width="1.25"/>
<line x1="128.2" y1="420.5" x2="150.7" y2="420.5" stroke="#860a0a" stroke-width="1.25"/>
<rect x="133.2" y="416.3" width="12.6" height="4.2" stroke="#860a0a" fill="#cbcbaa" stroke-width="1"/>
<circle cx="154.5" cy="418.4" r="3" stroke="#c80000" fill="#ff0000" stroke-width="1.1"/>
<circle cx="154.5" cy="418.4" r="1.3" stroke="#900000" fill="#a00000" stroke-width="0.6"/>
<line x1="104.7" y1="453.5" x2="120.2" y2="453.5" stroke="#0c4d0c" stroke-width="1.25"/>
<line x1="120.2" y1="453.5" x2="128.4" y2="453.5" stroke="#860a0a" stroke-width="1.25"/>
<circle cx="130.6" cy="453.5" r="2.1" stroke="#860a0a" fill="#e0e0cf" stroke-width="1"/>
<circle cx="148.3" cy="453.5" r="2.1" stroke="#860a0a" fill="#e0e0cf" stroke-width="1"/>
<line x1="150.5" y1="453.5" x2="158.7" y2="453.5" stroke="#860a0a" stroke-width="1.25"/>
<line x1="128.2" y1="447.5" x2="150.7" y2="447.5" stroke="#860a0a" stroke-width="1.25"/>
<rect x="133.2" y="443.5" width="12.6" height="4.2" stroke="#860a0a" fill="#cbcbaa" stroke-width="1"/>
<circle cx="154.5" cy="445.6" r="3" stroke="#c80000" fill="#ff0000" stroke-width="1.1"/>
<circle cx="154.5" cy="445.6" r="1.3" stroke="#900000" fill="#a00000" stroke-width="0.6"/>
<line x1="104.7" y1="472.5" x2="123.2" y2="472.5" stroke="#0c4d0c" stroke-width="1.25"/>
<line x1="123.2" y1="472.5" x2="131.4" y2="472.5" stroke="#860a0a" stroke-width="1.25"/>
<circle cx="133.6" cy="472.3" r="2.1" stroke="#860a0a" fill="#e0e0cf" stroke-width="1"/>
<circle cx="152.3" cy="472.3" r="2.1" stroke="#860a0a" fill="#e0e0cf" stroke-width="1"/>
<line x1="154.5" y1="472.5" x2="162.7" y2="472.5" stroke="#860a0a" stroke-width="1.25"/>
<line x1="131.2" y1="466.5" x2="154.7" y2="466.5" stroke="#860a0a" stroke-width="1.25"/>
<rect x="137.3" y="462.3" width="12.6" height="4.2" stroke="#860a0a" fill="#cbcbaa" stroke-width="1"/>
<circle cx="158.5" cy="464.4" r="3" stroke="#c80000" fill="#ff0000" stroke-width="1.1"/>
<circle cx="158.5" cy="464.4" r="1.3" stroke="#900000" fill="#a00000" stroke-width="0.6"/>
<line x1="158.7" y1="426.5" x2="289" y2="426.5" stroke="#0c4d0c" stroke-width="1.25"/>
<line x1="158.7" y1="453.5" x2="235.6" y2="453.5" stroke="#0c4d0c" stroke-width="1.25"/>
<line x1="235.5" y1="453.5" x2="235.5" y2="433.9" stroke="#0c4d0c" stroke-width="1.25"/>
<line x1="235.6" y1="433.5" x2="289" y2="433.5" stroke="#0c4d0c" stroke-width="1.25"/>
<line x1="162.7" y1="472.5" x2="250.3" y2="472.5" stroke="#0c4d0c" stroke-width="1.25"/>
<line x1="250.5" y1="472.3" x2="250.5" y2="441.6" stroke="#0c4d0c" stroke-width="1.25"/>
<line x1="250.3" y1="441.5" x2="289" y2="441.5" stroke="#0c4d0c" stroke-width="1.25"/>
<line x1="104.5" y1="426.3" x2="104.5" y2="510" stroke="#0c4d0c" stroke-width="1.25"/>
<line x1="96.3" y1="510.5" x2="113.1" y2="510.5" stroke="#0c4d0c" stroke-width="1.25"/>
<line x1="100.2" y1="514.5" x2="109.2" y2="514.5" stroke="#0c4d0c" stroke-width="1.25"/>
<line x1="103.2" y1="518.5" x2="106.2" y2="518.5" stroke="#0c4d0c" stroke-width="1.25"/>
<circle cx="104.7" cy="453.5" r="2.6" stroke="none" fill="#0c400c" stroke-width="0"/>
<circle cx="104.7" cy="472.3" r="2.6" stroke="none" fill="#0c400c" stroke-width="0"/>
<line x1="208.5" y1="453.5" x2="208.5" y2="471.9" stroke="#0c4d0c" stroke-width="1.25"/>
<line x1="208.5" y1="471.9" x2="208.5" y2="483.4" stroke="#860a0a" stroke-width="1.25"/>
<line x1="200.3" y1="483.5" x2="216.9" y2="483.5" stroke="#860a0a" stroke-width="1.25"/>
<path d="M200.6 491.7 A9.3 9.3 0 0 1 216.6 491.7" stroke="#860a0a" stroke-width="1.2" fill="none"/>
<line x1="208.5" y1="487.1" x2="208.5" y2="504.4" stroke="#860a0a" stroke-width="1.25"/>
<line x1="208.5" y1="504.4" x2="208.5" y2="510.3" stroke="#0c4d0c" stroke-width="1.25"/>
<line x1="243.5" y1="426.3" x2="243.5" y2="471.9" stroke="#0c4d0c" stroke-width="1.25"/>
<line x1="243.5" y1="471.9" x2="243.5" y2="483.4" stroke="#860a0a" stroke-width="1.25"/>
<line x1="235.2" y1="483.5" x2="251.8" y2="483.5" stroke="#860a0a" stroke-width="1.25"/>
<path d="M235.5 491.7 A9.3 9.3 0 0 1 251.5 491.7" stroke="#860a0a" stroke-width="1.2" fill="none"/>
<line x1="243.5" y1="487.1" x2="243.5" y2="504.4" stroke="#860a0a" stroke-width="1.25"/>
<line x1="243.5" y1="504.4" x2="243.5" y2="510.3" stroke="#0c4d0c" stroke-width="1.25"/>
<line x1="274.5" y1="441.6" x2="274.5" y2="471.9" stroke="#0c4d0c" stroke-width="1.25"/>
<line x1="274.5" y1="471.9" x2="274.5" y2="483.4" stroke="#860a0a" stroke-width="1.25"/>
<line x1="266.2" y1="483.5" x2="282.8" y2="483.5" stroke="#860a0a" stroke-width="1.25"/>
<path d="M266.5 491.7 A9.3 9.3 0 0 1 282.5 491.7" stroke="#860a0a" stroke-width="1.2" fill="none"/>
<line x1="274.5" y1="487.1" x2="274.5" y2="504.4" stroke="#860a0a" stroke-width="1.25"/>
<line x1="274.5" y1="504.4" x2="274.5" y2="510.3" stroke="#0c4d0c" stroke-width="1.25"/>
<line x1="208.6" y1="510.5" x2="274.5" y2="510.5" stroke="#0c4d0c" stroke-width="1.25"/>
<circle cx="208.6" cy="453.5" r="2.6" stroke="none" fill="#0c400c" stroke-width="0"/>
<circle cx="243.5" cy="426.3" r="2.6" stroke="none" fill="#0c400c" stroke-width="0"/>
<circle cx="274.5" cy="441.6" r="2.6" stroke="none" fill="#0c400c" stroke-width="0"/>
<circle cx="224.3" cy="510.3" r="2.6" stroke="none" fill="#0c400c" stroke-width="0"/>
<circle cx="243.5" cy="510.3" r="2.6" stroke="none" fill="#0c400c" stroke-width="0"/>
<line x1="224.5" y1="510.3" x2="224.5" y2="522.2" stroke="#0c4d0c" stroke-width="1.25"/>
<line x1="216" y1="522.5" x2="232.4" y2="522.5" stroke="#0c4d0c" stroke-width="1.25"/>
<line x1="219.8" y1="526.5" x2="228.8" y2="526.5" stroke="#0c4d0c" stroke-width="1.25"/>
<line x1="222.9" y1="530.5" x2="225.7" y2="530.5" stroke="#0c4d0c" stroke-width="1.25"/>
<text x="220.9" y="489.4" font-size="9.8" fill="#000000" stroke="#000000" stroke-width="0.1" text-anchor="start" textLength="11.9" lengthAdjust="spacingAndGlyphs">C9</text>
<text x="221.2" y="498.1" font-size="6.4" fill="#000000" stroke="#000000" stroke-width="0.24" text-anchor="start" textLength="14" lengthAdjust="spacingAndGlyphs">100n</text>
<text x="220.6" y="505" font-size="6.4" fill="#939393" stroke="#939393" stroke-width="0.25" text-anchor="start" textLength="24.7" lengthAdjust="spacingAndGlyphs">&lt;TEXT&gt;</text>
<text x="255.9" y="489.4" font-size="9.8" fill="#000000" stroke="#000000" stroke-width="0.1" text-anchor="start" textLength="11.9" lengthAdjust="spacingAndGlyphs">C4</text>
<text x="256.2" y="498.1" font-size="6.4" fill="#000000" stroke="#000000" stroke-width="0.24" text-anchor="start" textLength="14" lengthAdjust="spacingAndGlyphs">100n</text>
<text x="255.6" y="505" font-size="6.4" fill="#939393" stroke="#939393" stroke-width="0.25" text-anchor="start" textLength="24.7" lengthAdjust="spacingAndGlyphs">&lt;TEXT&gt;</text>
<text x="286.9" y="489.4" font-size="9.8" fill="#000000" stroke="#000000" stroke-width="0.1" text-anchor="start" textLength="11.9" lengthAdjust="spacingAndGlyphs">C5</text>
<text x="287.2" y="498.1" font-size="6.4" fill="#000000" stroke="#000000" stroke-width="0.24" text-anchor="start" textLength="14" lengthAdjust="spacingAndGlyphs">100n</text>
<text x="286.6" y="505" font-size="6.4" fill="#939393" stroke="#939393" stroke-width="0.25" text-anchor="start" textLength="24.7" lengthAdjust="spacingAndGlyphs">&lt;TEXT&gt;</text>
<path d="M136.99 405.75 L137.57 406.4 M136.69 407.7 L137.28 408.35 M136.69 411.28 L137.57 409.33 M138.45 406.73 L141.97 406.73 M139.92 405.43 L141.38 409 M138.74 408.03 L141.67 408.03 M138.45 409.33 L141.97 409.33 M139.62 409.33 L138.45 411.28 M140.8 409.33 L140.8 411.28 L141.97 411.28" stroke="#a84848" stroke-width="0.75" fill="none" stroke-linecap="square" stroke-linejoin="miter"/>
<path d="M143.35 406.08 L148.63 406.08 M144.82 405.3 L144.82 406.92 M147.16 405.3 L147.16 406.92 M145.11 407.38 L143.65 409.33 M144.41 408.35 L144.41 411.47 M148.33 407.7 L146.28 409.33 M146.28 407.38 L146.28 411.28 L148.63 411.28 L148.63 410.3" stroke="#a84848" stroke-width="0.75" fill="none" stroke-linecap="square" stroke-linejoin="miter"/>
<path d="M150.6 405.43 L151.18 406.08 M150.31 406.73 L150.31 411.47 M151.77 405.75 L154.99 405.75 L154.99 411.47 L154.41 411.47 M151.65 407.38 L153.65 407.38 L153.65 410.62 L151.65 410.62 L151.65 407.38 M151.65 409 L153.65 409" stroke="#a84848" stroke-width="0.75" fill="none" stroke-linecap="square" stroke-linejoin="miter"/>
<path d="M156.97 405.43 L156.97 411.47 M156.97 405.62 L158.31 405.62 L157.67 407.05 L158.31 408.35 L156.97 408.68 M158.72 405.62 L162.12 405.62 M159.31 406.53 L161.65 406.53 L161.65 407.57 L159.31 407.57 L159.31 406.53 M158.84 411.47 L158.84 408.35 L162.12 408.35 L162.12 411.47 M159.78 409 L160.48 409.98 L161.19 409 M160.48 409.98 L160.48 411.47 M159.6 410.62 L161.36 410.62" stroke="#a84848" stroke-width="0.75" fill="none" stroke-linecap="square" stroke-linejoin="miter"/>
<path d="M163.33 407.05 L165.97 407.05 L165.97 410.95 L165.38 411.47 M164.62 405.43 L164.62 408.35 L163.33 411.47 M166.73 406.73 L168.61 406.73 L168.61 410.62 L166.73 410.62 L166.73 406.73" stroke="#a84848" stroke-width="0.75" fill="none" stroke-linecap="square" stroke-linejoin="miter"/>
<path d="M156.08 435.71 L152.93 436.33 M152.65 437.57 L156.65 437.57 M151.96 439.12 L157.34 439.12 M154.65 436.02 L154.65 441.29 L153.79 441.1" stroke="#a84848" stroke-width="0.75" fill="none" stroke-linecap="square" stroke-linejoin="miter"/>
<path d="M158.75 436.33 L160.86 436.33 M158.46 437.88 L161.15 437.88 M159.72 437.88 L158.86 440.36 L160.86 440.05 M160.46 439.12 L161.04 440.67 M161.44 437.26 L163.72 437.26 L163.72 440.98 L163.15 441.48 M162.47 435.71 L162.47 438.5 L161.32 441.48" stroke="#a84848" stroke-width="0.75" fill="none" stroke-linecap="square" stroke-linejoin="miter"/>
<path d="M164.96 437.14 L167.08 437.14 M166.05 435.59 L166.05 441.48 M166.05 437.57 L164.96 439.74 M166.05 437.57 L166.96 439.12 M167.25 436.21 L170.4 436.21 M168.11 435.59 L168.11 436.83 M169.54 435.59 L169.54 436.83 M167.65 437.26 L169.94 437.26 L169.94 439.12 L167.65 439.12 L167.65 437.26 M167.65 438.19 L169.94 438.19 M167.25 439.93 L170.4 439.93 M168.79 439.12 L168.79 439.93 L167.36 441.48 M168.79 439.93 L170.4 441.48" stroke="#a84848" stroke-width="0.75" fill="none" stroke-linecap="square" stroke-linejoin="miter"/>
<path d="M171.58 436.95 L176.9 436.95 M175.87 435.71 L176.44 436.33 M174.89 435.59 L175.18 438.5 L176.15 440.98 L176.9 441.29 L176.9 440.36 M171.86 438.5 L174.44 438.5 M173.12 438.5 L173.12 440.67 M171.58 440.98 L174.72 440.48" stroke="#a84848" stroke-width="0.75" fill="none" stroke-linecap="square" stroke-linejoin="miter"/>
<path d="M144.59 482.83 L145.19 483.46 M144.3 484.72 L144.89 485.35 M144.3 488.19 L145.19 486.3 M146.07 483.77 L149.62 483.77 M147.55 482.51 L149.03 485.98 M146.37 485.03 L149.33 485.03 M146.07 486.3 L149.62 486.3 M147.26 486.3 L146.07 488.19 M148.44 486.3 L148.44 488.19 L149.62 488.19" stroke="#a84848" stroke-width="0.75" fill="none" stroke-linecap="square" stroke-linejoin="miter"/>
<path d="M151.02 483.14 L156.34 483.14 M152.5 482.39 L152.5 483.96 M154.86 482.39 L154.86 483.96 M152.79 484.4 L151.31 486.3 M152.08 485.35 L152.08 488.37 M156.05 484.72 L153.98 486.3 M153.98 484.4 L153.98 488.19 L156.34 488.19 L156.34 487.24" stroke="#a84848" stroke-width="0.75" fill="none" stroke-linecap="square" stroke-linejoin="miter"/>
<path d="M157.92 483.14 L159.81 483.14 L159.81 487.56 L157.92 487.56 L157.92 483.14 M157.92 485.35 L159.81 485.35 M160.28 484.09 L163.24 484.09 M162.17 482.39 L162.17 488.06 L161.46 488.37 M160.87 485.35 L161.35 486.17" stroke="#a84848" stroke-width="0.75" fill="none" stroke-linecap="square" stroke-linejoin="miter"/>
<path d="M165.64 482.39 L165.64 487.56 L166.82 486.93 M168.6 482.51 L165.94 484.72 M164.34 485.03 L169.96 485.03 M166.82 485.03 L169.78 488.37" stroke="#a84848" stroke-width="0.75" fill="none" stroke-linecap="square" stroke-linejoin="miter"/>
<path d="M171.18 484.09 L173.84 484.09 L173.84 487.87 L173.25 488.37 M172.48 482.51 L172.48 485.35 L171.18 488.37 M174.61 483.77 L176.5 483.77 L176.5 487.56 L174.61 487.56 L174.61 483.77" stroke="#a84848" stroke-width="0.75" fill="none" stroke-linecap="square" stroke-linejoin="miter"/>
<text x="571.7" y="498.9" font-size="16" fill="#ff3535" stroke="#ff3535" stroke-width="0.25" text-anchor="start" textLength="15.1" lengthAdjust="spacingAndGlyphs">51</text>
<path d="M590.9 486.65 L601.7 486.65 L601.7 491.3 L590.9 491.3 L590.9 486.65 M596.3 486.65 L596.3 496.1 M592.8 487.85 L593.96 489.95 M599.8 487.85 L598.64 489.95 M591.77 493.7 L600.83 493.7 M589.29 496.55 L603.31 496.55 M590.75 498.5 L589.73 501.05 M594.11 498.65 L594.69 500.9 M597.76 498.65 L598.49 500.9 M601.41 498.5 L603.02 500.9" stroke="#ff3535" stroke-width="1.15" fill="none" stroke-linecap="square" stroke-linejoin="miter"/>
<path d="M607.72 488.72 L617.45 488.72 L617.45 497.46 L607.72 497.46 L607.72 488.72 M607.72 493.09 L617.45 493.09 M612.44 485.6 L612.44 500.73 L620.23 500.73 L620.23 498.55" stroke="#ff3535" stroke-width="1.15" fill="none" stroke-linecap="square" stroke-linejoin="miter"/>
<path d="M624.26 487.1 L633.03 487.1 L629.16 490.7 M629.16 490.7 L629.16 500.9 L626.97 500.3 M623.1 492.2 L636 492.2" stroke="#ff3535" stroke-width="1.15" fill="none" stroke-linecap="square" stroke-linejoin="miter"/>
<!--CJK-->
</svg></div>
</body></html>
